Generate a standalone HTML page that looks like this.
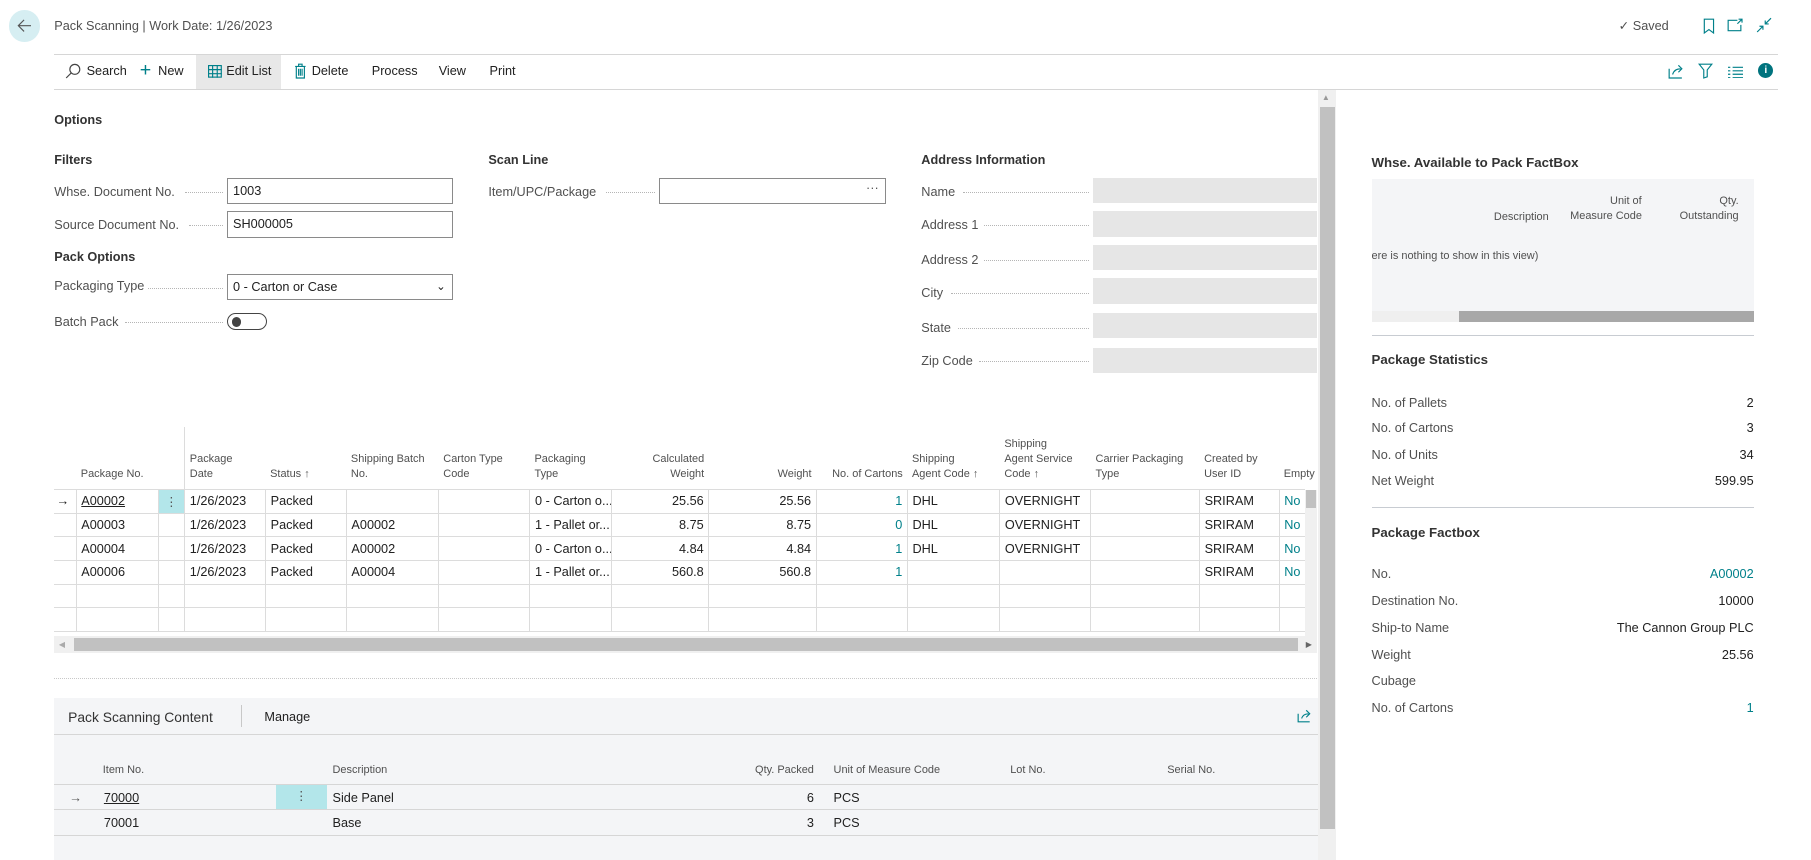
<!DOCTYPE html>
<html><head><meta charset="utf-8"><style>
*{box-sizing:border-box;margin:0;padding:0}
html,body{width:1811px;height:860px;overflow:hidden;background:#fff}
#w{position:absolute;left:0;top:0;width:1568px;height:745px;zoom:1.1545;font-family:"Liberation Sans",sans-serif;color:#212121;font-size:11px}
.a{position:absolute;white-space:nowrap;line-height:14px}
.h{font-weight:bold;color:#333;font-size:11px}
.lbl{color:#505050}
.dots{position:absolute;border-bottom:1px dotted #b5b5b5;height:1px}
.inp{position:absolute;border:1px solid #8a8a8a;background:#fff;padding-left:4px;line-height:21px;height:23px}
.gb{position:absolute;background:#e6e6e6;height:22px}
.line{position:absolute;height:1px;background:#d6d6d6}
table{border-collapse:collapse;table-layout:fixed;position:absolute}
td{border:1px solid #dcdcdc;height:20.5px;padding:0 4px;white-space:nowrap;overflow:hidden;font-size:11px}
th{font-weight:normal;color:#505050;font-size:9.5px;text-align:left;vertical-align:bottom;padding:0 4px 6px;line-height:13px;border-left:1px solid #dcdcdc}
.r{text-align:right}.t{color:#00808a}
.u{text-decoration:underline}
</style></head><body><div id="w">
<div style="position:absolute;left:8px;top:9px;width:27px;height:27px;border-radius:50%;background:#d6eef2"></div>
<svg style="position:absolute;left:14px;top:15px" width="15" height="15" viewBox="0 0 15 15"><path d="M13 7.5H2M7 2.5L2 7.5L7 12.5" stroke="#555" fill="none" stroke-width="1"/></svg>
<div class="a lbl" style="left:47px;top:16px">Pack Scanning | Work Date: 1/26/2023</div>
<div class="a lbl" style="left:1402px;top:16px">✓ Saved</div>
<svg style="position:absolute;left:1474px;top:16px" width="12" height="14"><path d="M2 1H10V13L6 10L2 13Z" stroke="#00808a" fill="none"/></svg>
<svg style="position:absolute;left:1496px;top:16px" width="14" height="12"><path d="M9 2H1V11H12V6M10 1H13V4M13 1L9 5" stroke="#00808a" fill="none"/></svg>
<svg style="position:absolute;left:1521px;top:15px" width="14" height="14"><path d="M13 1L8 6M8 3V6H11M1 13L6 8M3 8H6V11" stroke="#00808a" fill="none"/></svg>
<div class="line" style="left:47px;top:47px;width:1493px"></div>
<div style="position:absolute;left:170px;top:48px;width:73px;height:29px;background:#e8e8e8"></div>
<svg style="position:absolute;left:56px;top:55px" width="14" height="14"><circle cx="8.5" cy="5.5" r="4.3" stroke="#444" fill="none"/><path d="M5.5 8.5L1 13" stroke="#444"/></svg>
<div class="a" style="left:75px;top:55px">Search</div>
<div class="a" style="left:121px;top:53px;font-size:17px;color:#00808a;line-height:17px">+</div>
<div class="a" style="left:137px;top:55px">New</div>
<svg style="position:absolute;left:180px;top:56px" width="13" height="12"><rect x="0.5" y="0.5" width="11" height="10" fill="none" stroke="#00808a"/><path d="M0 4H12M0 7.5H12M4 0V11M8 0V11" stroke="#00808a"/></svg>
<div class="a" style="left:196px;top:55px">Edit List</div>
<svg style="position:absolute;left:255px;top:55px" width="11" height="14"><path d="M1 3H10M4 3V1H7V3M2 3V13H9V3M4 5V11M5.5 5V11M7 5V11" stroke="#00808a" fill="none"/></svg>
<div class="a" style="left:270px;top:55px">Delete</div>
<div class="a" style="left:322px;top:55px">Process</div>
<div class="a" style="left:380px;top:55px">View</div>
<div class="a" style="left:424px;top:55px">Print</div>
<svg style="position:absolute;left:1445px;top:55px" width="14" height="14"><path d="M1 5V13H12M4 10C5 6 8 5 11 5M9 2L12 5L9 8" stroke="#00808a" fill="none"/></svg>
<svg style="position:absolute;left:1471px;top:55px" width="13" height="14"><path d="M1 1H12L8 6V12L5 13V6Z" stroke="#00808a" fill="none"/></svg>
<svg style="position:absolute;left:1497px;top:56px" width="13" height="12"><path d="M0 2H2M4 2H13M0 5H2M4 5H13M0 8H2M4 8H13M0 11H2M4 11H13" stroke="#00808a"/></svg>
<div style="position:absolute;left:1523px;top:55px;width:13px;height:13px;border-radius:50%;background:#00737e;color:#fff;font-size:9px;font-weight:bold;text-align:center;line-height:13px">i</div>
<div class="line" style="left:47px;top:77px;width:1493px"></div>
<div style="position:absolute;left:1142px;top:78px;width:15px;height:667px;background:#f0f0f0"></div>
<div style="position:absolute;left:1143px;top:93px;width:13px;height:625px;background:#c1c1c1"></div>
<div class="a" style="left:1145px;top:78px;font-size:7px;color:#999">▲</div>
<div class="a h" style="left:47px;top:97px">Options</div>
<div class="a h" style="left:47px;top:132px">Filters</div>
<div class="a lbl" style="left:47px;top:159px">Whse. Document No.</div><div class="dots" style="left:160px;top:166px;width:33px"></div>
<div class="inp" style="left:197px;top:154px;width:195px">1003</div>
<div class="a lbl" style="left:47px;top:188px">Source Document No.</div><div class="dots" style="left:164px;top:195px;width:29px"></div>
<div class="inp" style="left:197px;top:183px;width:195px">SH000005</div>
<div class="a h" style="left:47px;top:216px">Pack Options</div>
<div class="a lbl" style="left:47px;top:241px">Packaging Type</div><div class="dots" style="left:128px;top:249px;width:65px"></div>
<div class="inp" style="left:197px;top:237px;width:195px">0 - Carton or Case<span style="position:absolute;right:5px;top:0;font-size:10px">⌄</span></div>
<div class="a lbl" style="left:47px;top:272px">Batch Pack</div><div class="dots" style="left:108px;top:279px;width:85px"></div>
<div style="position:absolute;left:197px;top:271px;width:34px;height:15px;border:1px solid #444;border-radius:8px"></div>
<div style="position:absolute;left:201px;top:275px;width:8px;height:8px;border-radius:50%;background:#444"></div>
<div class="a h" style="left:423px;top:132px">Scan Line</div>
<div class="a lbl" style="left:423px;top:159px">Item/UPC/Package</div><div class="dots" style="left:525px;top:166px;width:42px"></div>
<div class="inp" style="left:571px;top:154px;width:196px"><span style="position:absolute;right:5px;top:-2px;color:#555">···</span></div>
<div class="a h" style="left:798px;top:132px">Address Information</div>
<div class="a lbl" style="left:798px;top:159px">Name</div><div class="dots" style="left:834px;top:166px;width:109px"></div><div class="gb" style="left:947px;top:154px;width:194px"></div>
<div class="a lbl" style="left:798px;top:188px">Address 1</div><div class="dots" style="left:852px;top:195px;width:91px"></div><div class="gb" style="left:947px;top:183px;width:194px"></div>
<div class="a lbl" style="left:798px;top:218px">Address 2</div><div class="dots" style="left:852px;top:225px;width:91px"></div><div class="gb" style="left:947px;top:212px;width:194px"></div>
<div class="a lbl" style="left:798px;top:247px">City</div><div class="dots" style="left:824px;top:254px;width:119px"></div><div class="gb" style="left:947px;top:241px;width:194px"></div>
<div class="a lbl" style="left:798px;top:277px">State</div><div class="dots" style="left:830px;top:284px;width:113px"></div><div class="gb" style="left:947px;top:271px;width:194px"></div>
<div class="a lbl" style="left:798px;top:306px">Zip Code</div><div class="dots" style="left:848px;top:313px;width:95px"></div><div class="gb" style="left:947px;top:301px;width:194px"></div>
<table style="left:47px;top:370px;width:1083px">
<colgroup><col style="width:19px"><col style="width:71px"><col style="width:23px"><col style="width:70px"><col style="width:70px"><col style="width:80px"><col style="width:79px"><col style="width:71px"><col style="width:84px"><col style="width:93px"><col style="width:79px"><col style="width:80px"><col style="width:79px"><col style="width:94px"><col style="width:69px"><col style="width:22px"></colgroup>
<tr style="height:54px"><th style="border-left:none"></th><th style="border-left:none">Package No.</th><th style="border-left:none"></th><th>Package<br>Date</th><th style="border-left:none">Status ↑</th><th style="border-left:none">Shipping Batch<br>No.</th><th style="border-left:none">Carton Type<br>Code</th><th style="border-left:none">Packaging<br>Type</th><th class="r" style="border-left:none">Calculated<br>Weight</th><th class="r" style="border-left:none">Weight</th><th class="r" style="border-left:none">No. of Cartons</th><th style="border-left:none">Shipping<br>Agent Code ↑</th><th style="border-left:none">Shipping<br>Agent Service<br>Code ↑</th><th style="border-left:none">Carrier Packaging<br>Type</th><th style="border-left:none">Created by<br>User ID</th><th style="border-left:none">Empty</th></tr>
<tr><td style="border-left:none;padding:0 2px">→</td><td class="u">A00002</td><td style="background:#b3e6ea;text-align:center;color:#555">⋮</td><td>1/26/2023</td><td>Packed</td><td></td><td></td><td>0 - Carton o...</td><td class="r">25.56</td><td class="r">25.56</td><td class="r t">1</td><td>DHL</td><td>OVERNIGHT</td><td></td><td>SRIRAM</td><td class="t" style="border-right:none">No</td></tr>
<tr><td style="border-left:none"></td><td>A00003</td><td></td><td>1/26/2023</td><td>Packed</td><td>A00002</td><td></td><td>1 - Pallet or...</td><td class="r">8.75</td><td class="r">8.75</td><td class="r t">0</td><td>DHL</td><td>OVERNIGHT</td><td></td><td>SRIRAM</td><td class="t" style="border-right:none">No</td></tr>
<tr><td style="border-left:none"></td><td>A00004</td><td></td><td>1/26/2023</td><td>Packed</td><td>A00002</td><td></td><td>0 - Carton o...</td><td class="r">4.84</td><td class="r">4.84</td><td class="r t">1</td><td>DHL</td><td>OVERNIGHT</td><td></td><td>SRIRAM</td><td class="t" style="border-right:none">No</td></tr>
<tr><td style="border-left:none"></td><td>A00006</td><td></td><td>1/26/2023</td><td>Packed</td><td>A00004</td><td></td><td>1 - Pallet or...</td><td class="r">560.8</td><td class="r">560.8</td><td class="r t">1</td><td></td><td></td><td></td><td>SRIRAM</td><td class="t" style="border-right:none">No</td></tr>
<tr><td style="border-left:none"></td><td></td><td></td><td></td><td></td><td></td><td></td><td></td><td></td><td></td><td></td><td></td><td></td><td></td><td></td><td style="border-right:none"></td></tr>
<tr><td style="border-left:none"></td><td></td><td></td><td></td><td></td><td></td><td></td><td></td><td></td><td></td><td></td><td></td><td></td><td></td><td></td><td style="border-right:none"></td></tr>
</table>
<div style="position:absolute;left:1130px;top:424px;width:11px;height:127px;background:#f0f0f0"></div>
<div style="position:absolute;left:1131px;top:424px;width:9px;height:16px;background:#c1c1c1"></div>
<div style="position:absolute;left:47px;top:551px;width:1094px;height:15px;background:#f0f0f0"></div>
<div style="position:absolute;left:64px;top:553px;width:1060px;height:11px;background:#c1c1c1"></div>
<div class="a" style="left:51px;top:552px;font-size:7px;color:#aaa">◀</div>
<div class="a" style="left:1131px;top:552px;font-size:7px;color:#666">▶</div>
<div style="position:absolute;left:47px;top:587px;width:1094px;border-bottom:1px dotted #c8c8c8"></div>
<div style="position:absolute;left:47px;top:605px;width:1095px;height:140px;background:#f4f5f7"></div>
<div class="a" style="left:59px;top:614px;font-size:12px;color:#333">Pack Scanning Content</div>
<div style="position:absolute;left:209px;top:611px;width:1px;height:19px;background:#c8c8c8"></div>
<div class="a" style="left:229px;top:614px">Manage</div>
<svg style="position:absolute;left:1123px;top:613px" width="13" height="13"><path d="M1 5V12H11M4 9C5 6 7 5 10 5M8 2L11 5L8 8" stroke="#00808a" fill="none"/></svg>
<div class="line" style="left:47px;top:636px;width:1095px"></div>
<div class="a lbl" style="left:89px;top:660px;font-size:9.5px">Item No.</div>
<div class="a lbl" style="left:288px;top:660px;font-size:9.5px">Description</div>
<div class="a lbl" style="left:640px;top:660px;font-size:9.5px;width:65px;text-align:right">Qty. Packed</div>
<div class="a lbl" style="left:722px;top:660px;font-size:9.5px">Unit of Measure Code</div>
<div class="a lbl" style="left:875px;top:660px;font-size:9.5px">Lot No.</div>
<div class="a lbl" style="left:1011px;top:660px;font-size:9.5px">Serial No.</div>
<div class="line" style="left:47px;top:679px;width:1095px"></div>
<div class="line" style="left:47px;top:701px;width:1095px"></div>
<div class="line" style="left:47px;top:723px;width:1095px"></div>
<div style="position:absolute;left:239px;top:680px;width:44px;height:21px;background:#b3e6ea;text-align:center;line-height:20px;color:#555">⋮</div>
<div class="a" style="left:60px;top:684px;color:#555">→</div>
<div class="a u" style="left:90px;top:684px">70000</div>
<div class="a" style="left:288px;top:684px">Side Panel</div>
<div class="a" style="left:690px;top:684px;width:15px;text-align:right">6</div>
<div class="a" style="left:722px;top:684px">PCS</div>
<div class="a" style="left:90px;top:706px">70001</div>
<div class="a" style="left:288px;top:706px">Base</div>
<div class="a" style="left:690px;top:706px;width:15px;text-align:right">3</div>
<div class="a" style="left:722px;top:706px">PCS</div>
<div class="a h" style="left:1188px;top:134px;font-size:11.5px">Whse. Available to Pack FactBox</div>
<div style="position:absolute;left:1188px;top:155px;width:331px;height:124px;background:#f4f5f7"></div>
<div class="a lbl" style="left:1294px;top:181px;font-size:9.5px">Description</div>
<div class="a lbl" style="left:1360px;top:168px;font-size:9.5px;width:62px;text-align:right;line-height:13px">Unit of<br>Measure Code</div>
<div class="a lbl" style="left:1450px;top:168px;font-size:9.5px;width:56px;text-align:right;line-height:13px">Qty.<br>Outstanding</div>
<div class="a lbl" style="left:1188px;top:215px;font-size:9.5px;overflow:hidden;width:200px">ere is nothing to show in this view)</div>
<div style="position:absolute;left:1188px;top:269px;width:76px;height:10px;background:#efefef"></div>
<div style="position:absolute;left:1264px;top:269px;width:255px;height:10px;background:#a8a8a8"></div>
<div class="line" style="left:1188px;top:290px;width:331px;background:#c8ccd2"></div>
<div class="a h" style="left:1188px;top:305px;font-size:11.5px">Package Statistics</div>
<div class="a lbl" style="left:1188px;top:342px">No. of Pallets</div><div class="a" style="left:1419px;top:342px;width:100px;text-align:right">2</div>
<div class="a lbl" style="left:1188px;top:364px">No. of Cartons</div><div class="a" style="left:1419px;top:364px;width:100px;text-align:right">3</div>
<div class="a lbl" style="left:1188px;top:387px">No. of Units</div><div class="a" style="left:1419px;top:387px;width:100px;text-align:right">34</div>
<div class="a lbl" style="left:1188px;top:410px">Net Weight</div><div class="a" style="left:1419px;top:410px;width:100px;text-align:right">599.95</div>
<div class="line" style="left:1188px;top:439px;width:331px;background:#c8ccd2"></div>
<div class="a h" style="left:1188px;top:455px;font-size:11.5px">Package Factbox</div>
<div class="a lbl" style="left:1188px;top:490px">No.</div><div class="a t" style="left:1419px;top:490px;width:100px;text-align:right">A00002</div>
<div class="a lbl" style="left:1188px;top:514px">Destination No.</div><div class="a" style="left:1419px;top:514px;width:100px;text-align:right">10000</div>
<div class="a lbl" style="left:1188px;top:537px">Ship-to Name</div><div class="a" style="left:1369px;top:537px;width:150px;text-align:right">The Cannon Group PLC</div>
<div class="a lbl" style="left:1188px;top:560px">Weight</div><div class="a" style="left:1419px;top:560px;width:100px;text-align:right">25.56</div>
<div class="a lbl" style="left:1188px;top:583px">Cubage</div>
<div class="a lbl" style="left:1188px;top:606px">No. of Cartons</div><div class="a t" style="left:1419px;top:606px;width:100px;text-align:right">1</div>
</div></body></html>
